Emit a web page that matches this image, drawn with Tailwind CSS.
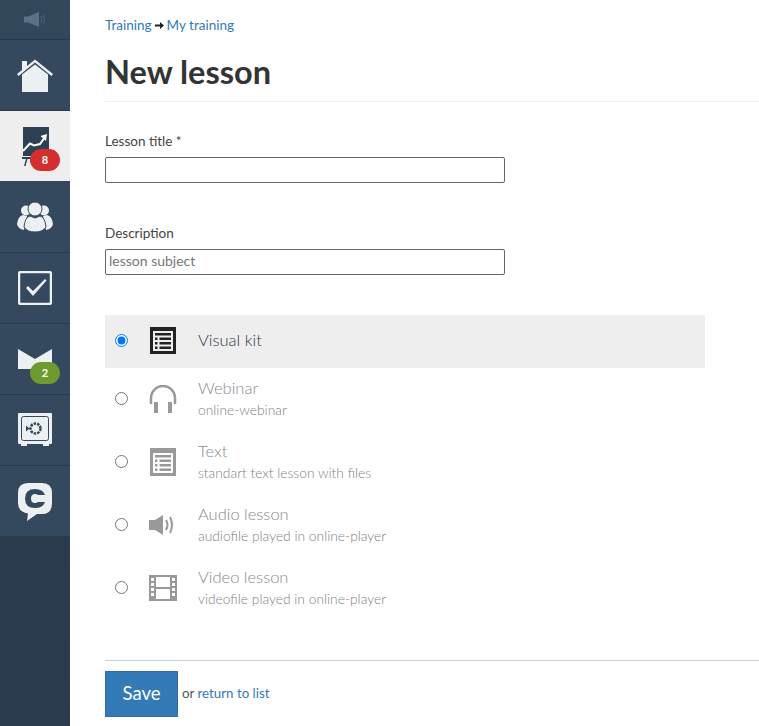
<!DOCTYPE html>
<html lang="en">
<head>
    <meta charset="UTF-8">
    <meta name="viewport" content="width=device-width, initial-scale=1.0">
    <title>New lesson</title>
    <script src="https://cdn.jsdelivr.net/npm/@tailwindcss/browser@4"></script>
</head>
<body class="bg-white font-['Lato','Liberation_Sans',sans-serif] text-[#333]">
    <div class="flex h-[726px] w-[759px] overflow-hidden">
        <!-- sidebar -->
        <nav class="flex w-[70px] shrink-0 flex-col bg-gradient-to-b from-[#2e4053] to-[#2b3a4c]">
            <div class="flex h-[40px] items-center justify-center border-b border-[#2a3949] bg-[#33475b]">
                <svg width="22" height="15" viewBox="0 0 22 15"><path d="M0 4.500h4L15 0v15L4 10.500H0z" fill="#5b7187"/><path d="M17 4q1.500 3.500 0 7M19.500 2.500q2 5 0 10" fill="none" stroke="#4e647a"/></svg>
            </div>
            <a class="flex h-[71px] items-center justify-center border-b border-[#2a3949] bg-[#35495e]">
                <svg width="36" height="34" viewBox="0 0 36 34" class="mt-[1px]"><path d="M5 2h5v5l8-6.500L36 15l-1.500 2L18 3.500 1.500 17 0 15l5-4z" fill="#edf0f2"/><path d="M5 15.500 18 5.500l13 10V33H5z" fill="#edf0f2"/></svg>
            </a>
            <a class="relative flex h-[70px] items-center justify-center bg-[#eee]">
                <svg width="27" height="40" viewBox="0 0 27 40" class="mb-[-1px] mr-[-1px]"><path d="M1 0h26v29H1z" fill="#2e4053"/><path d="M1 24l7-7.500 4 2 6-1.500 5-7" fill="none" stroke="#fff" stroke-width="2"/><path d="M18.500 9l6.500-2-1 7z" fill="#fff"/><path d="M0 30h13v2H0z" fill="#2e4053"/><path d="M2 39l2-7h1.500l-2 7z" fill="#2e4053"/></svg>
                <span class="absolute left-[30px] top-[38px] flex h-[22px] w-[30px] items-center justify-center rounded-[11px] bg-[#d32f2f] text-[11px] font-bold text-white">8</span>
            </a>
            <a class="flex h-[72px] items-center justify-center border-b border-[#2a3949] bg-[#35495e]">
                <svg width="36" height="30" viewBox="0 0 36 30"><circle cx="9" cy="8.500" r="5" fill="#edf0f2"/><circle cx="27" cy="8.500" r="5" fill="#edf0f2"/><path d="M0 22q1-8 6-9l4 1-3 14q-6-1-7-6zM36 22q-1-8-6-9l-4 1 3 14q6-1 7-6z" fill="#edf0f2"/><circle cx="18" cy="7" r="7" fill="#edf0f2" stroke="#35495e"/><path d="M7 25q1-10 6-11l5 2 5-2q5 1 6 11-3 5-11 5t-11-5z" fill="#edf0f2" stroke="#35495e"/></svg>
            </a>
            <a class="flex h-[71px] items-center justify-center border-b border-[#2a3949] bg-[#35495e]">
                <svg width="34" height="34" viewBox="0 0 34 34"><rect x="1" y="1" width="32" height="32" rx="2" fill="none" stroke="#edf0f2" stroke-width="2.500"/><path d="M8 17l2-2 5 5L27 8l1.500 1.500L15 25z" fill="#edf0f2"/></svg>
            </a>
            <a class="relative flex h-[71px] items-center justify-center border-b border-[#2a3949] bg-[#35495e]">
                <svg width="34" height="20" viewBox="0 0 34 20" class="mt-[-1px]"><path d="M0 0 17 10 34 0v20H0z" fill="#edf0f2"/></svg>
                <span class="absolute left-[30px] top-[38px] flex h-[22px] w-[30px] items-center justify-center rounded-[11px] bg-[#6f9a2d] text-[11px] font-bold text-white">2</span>
            </a>
            <a class="flex h-[71px] items-center justify-center border-b border-[#2a3949] bg-[#35495e]">
                <svg width="34" height="34" viewBox="0 0 34 34"><path d="M1 0h32a1 1 0 0 1 1 1v29a1 1 0 0 1-1 1h-2v2h-6v-2H9v2H3v-2H1a1 1 0 0 1-1-1V1a1 1 0 0 1 1-1z" fill="#edf0f2"/><rect x="3.500" y="3.500" width="27" height="24" rx="2" fill="none" stroke="#35495e"/><circle cx="17.500" cy="15.500" r="5" fill="none" stroke="#35495e" stroke-width="2.500" stroke-dasharray="2.500 1"/><path d="M8 12.500l3.500 3-3.500 3z" fill="#35495e"/></svg>
            </a>
            <a class="flex h-[70px] items-center justify-center bg-[#35495e]">
                <svg width="34" height="38" viewBox="0 0 34 38" class="mt-[1px]"><path d="M10 0h14q10 0 10 10v10q0 11-10 11h-5l-10 7 1-7.500Q0 29 0 20V10Q0 0 10 0z" fill="#edf0f2"/><path d="M27 12q-2-6-10-6-10 0-10 9.500T17 25q8 0 10-6h-7q-1 1-3 1-4 0-4-4.500T17 11q2 0 3 1z" fill="#35495e"/></svg>
            </a>
        </nav>

        <!-- content -->
        <main class="min-w-0 flex-1 pl-[35px]">
            <div class="mt-[16px] flex h-[19px] items-center gap-[3px] text-[13.500px] text-[#337ab7]">
                <a>Training</a>
                <svg width="9" height="7" viewBox="0 0 9 7"><path d="M0 2.500h5V0l4 3.500L5 7V4.500H0z" fill="#222"/></svg>
                <a>My training</a>
            </div>
            <h1 class="mt-[17px] h-[50px] border-b border-[#eee] text-[32.500px] leading-[40px] font-bold text-[#333]">New lesson</h1>

            <label class="mt-[31px] block text-[13.500px] leading-[17px] text-[#444]">Lesson title *</label>
            <input type="text" class="mt-[7px] block h-[26px] w-[400px] rounded-[2px] border border-[#666] bg-white px-[3px] text-[14px]">

            <label class="mt-[42px] block text-[13.500px] leading-[17px] text-[#444]">Description</label>
            <input type="text" placeholder="lesson subject" class="mt-[7px] block h-[26px] w-[400px] rounded-[2px] border border-[#666] bg-white px-[3px] pb-[3px] text-[14px] placeholder:text-[#777]">

            <div class="mt-[40px] w-[600px]">
                <label class="flex h-[53px] items-center bg-[#eee] pb-[2px]">
                    <input type="radio" name="kind" checked class="ml-[10px] h-[13px] w-[13px] accent-[#0075ff]">
                    <svg width="26" height="27" viewBox="0 0 26 27" class="ml-[22px]"><path d="M0 0h26v27H0z" fill="#222"/><path d="M3 4h20v20H3z" fill="#eee"/><path d="M5 6h16v2.500H5zM5 10.500h2.500V13H5zM9.500 10.500H21V13H9.500zM5 15h2.500v2.500H5zM9.500 15H21v2.500H9.500zM5 19.500h2.500V22H5zM9.500 19.500H21V22H9.500z" fill="#222"/></svg>
                    <span class="ml-[22px] text-[16.500px] font-light text-[#2f3a48]">Visual kit</span>
                </label>
                <label class="flex h-[63px] items-center pb-[2px]">
                    <input type="radio" name="kind" class="ml-[10px] h-[13px] w-[13px]">
                    <svg width="28" height="28" viewBox="0 0 28 28" class="ml-[21px]"><path d="M2 19v-6a12 12 0 0 1 24 0v6" fill="none" stroke="#999" stroke-width="2.500"/><path d="M5 17h4v11H5zM19 17h4v11h-4z" fill="#999"/></svg>
                    <span class="ml-[21px] block">
                        <span class="block text-[16.500px] leading-[23px] font-light text-[#8a8a8a]">Webinar</span>
                        <span class="block text-[13.800px] leading-[20px] font-light text-[#808080]">online-webinar</span>
                    </span>
                </label>
                <label class="flex h-[63px] items-center pb-[2px]">
                    <input type="radio" name="kind" class="ml-[10px] h-[13px] w-[13px]">
                    <svg width="26" height="28" viewBox="0 0 26 28" class="ml-[22px]"><path d="M0 0h26v28H0z" fill="#999"/><path d="M3 5h20v20H3z" fill="#fff"/><path d="M5 7h16v2.500H5zM5 11.500h2.500V14H5zM9.500 11.500H21V14H9.500zM5 16h2.500v2.500H5zM9.500 16H21v2.500H9.500zM5 20.500h2.500V23H5zM9.500 20.500H21V23H9.500z" fill="#999"/></svg>
                    <span class="ml-[22px] block">
                        <span class="block text-[16.500px] leading-[23px] font-light text-[#8a8a8a]">Text</span>
                        <span class="block text-[13.800px] leading-[20px] font-light text-[#808080]">standart text lesson with files</span>
                    </span>
                </label>
                <label class="flex h-[63px] items-center pb-[2px]">
                    <input type="radio" name="kind" class="ml-[10px] h-[13px] w-[13px]">
                    <svg width="27" height="20" viewBox="0 0 27 20" class="ml-[21px]"><path d="M0 5h6l8-5v20l-8-5H0z" fill="#999"/><path d="M17 5q3 5 0 10M21 2q4 8 0 16" fill="none" stroke="#999" stroke-width="2"/></svg>
                    <span class="ml-[22px] block">
                        <span class="block text-[16.500px] leading-[23px] font-light text-[#8a8a8a]">Audio lesson</span>
                        <span class="block text-[13.800px] leading-[20px] font-light text-[#808080]">audiofile played in online-player</span>
                    </span>
                </label>
                <label class="flex h-[63px] items-center pb-[2px]">
                    <input type="radio" name="kind" class="ml-[10px] h-[13px] w-[13px]">
                    <svg width="28" height="26" viewBox="0 0 28 26" class="ml-[21px]"><path d="M0 0h28v26H0z" fill="#999"/><path d="M7 2h14v10H7zM7 14h14v10H7zM2 3h3v3H2zM2 8h3v3H2zM2 13h3v3H2zM2 18h3v3H2zM23 3h3v3h-3zM23 8h3v3h-3zM23 13h3v3h-3zM23 18h3v3h-3z" fill="#fff"/></svg>
                    <span class="ml-[21px] block">
                        <span class="block text-[16.500px] leading-[23px] font-light text-[#8a8a8a]">Video lesson</span>
                        <span class="block text-[13.800px] leading-[20px] font-light text-[#808080]">videofile played in online-player</span>
                    </span>
                </label>
            </div>

            <div class="mt-[40px] flex items-center gap-[4px] border-t border-[#ccc] pt-[10px] text-[13.300px]">
                <button class="h-[46px] w-[73px] border border-[#2e6da4] bg-[#337ab7] text-[18.500px] text-white">Save</button>
                <span class="text-[#555]">or <a class="text-[#337ab7]">return to list</a></span>
            </div>
        </main>
    </div>
</body>
</html>
